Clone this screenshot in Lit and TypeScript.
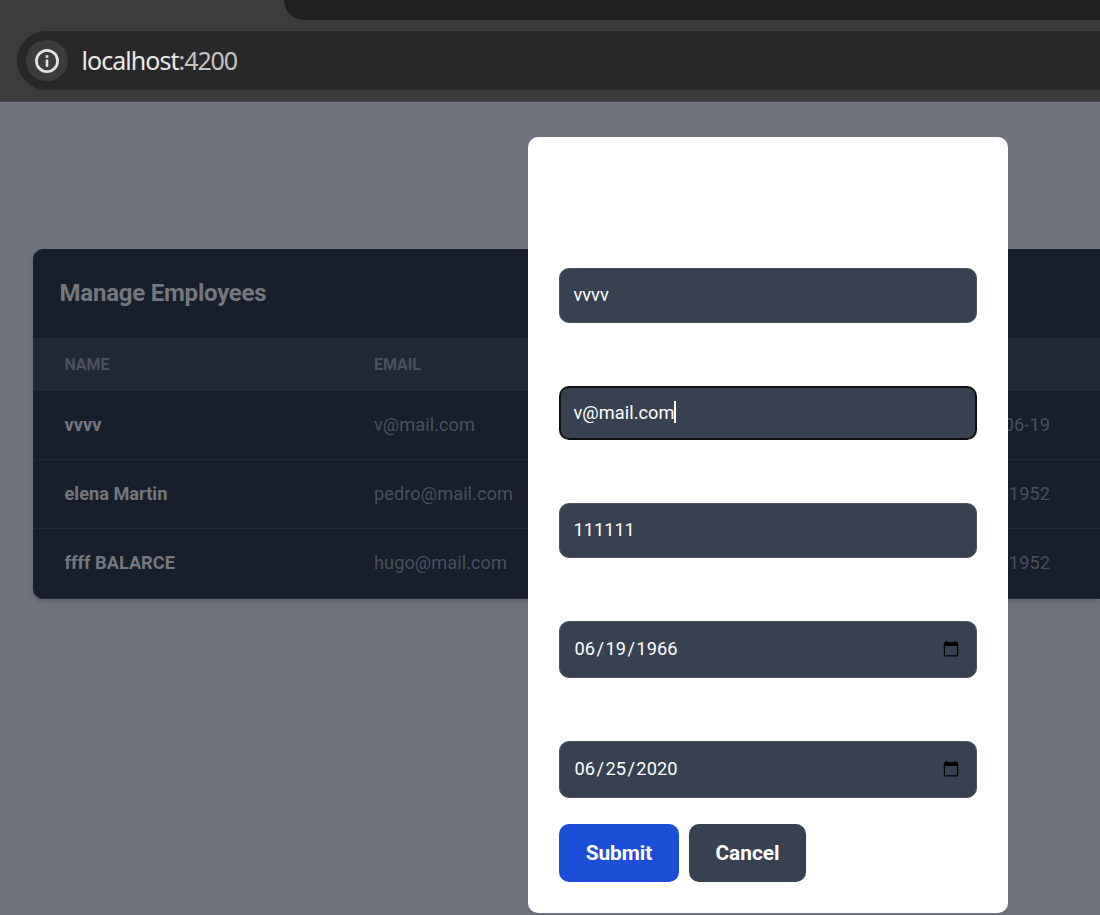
import { LitElement, html, css } from "lit";
import { customElement } from "lit/decorators.js";

interface Employee {
  name: string;
  email: string;
  date: string;
}

const EMPLOYEES: Employee[] = [
  { name: "vvvv", email: "v@mail.com", date: "1966-06-19" },
  { name: "elena Martin", email: "pedro@mail.com", date: "10-10-1952" },
  { name: "ffff BALARCE", email: "hugo@mail.com", date: "10-10-1952" },
];

@customElement("browser-bar")
class BrowserBar extends LitElement {
  static styles = css`
    :host {
      display: block;
      height: 102px;
      box-sizing: border-box;
      background: #3c3c3c;
      border-bottom: 1px solid #464646;
      overflow: hidden;
    }
    .tabs {
      height: 20px;
      margin-left: 284px;
      background: #1f2120;
      border-bottom-left-radius: 20px;
    }
    .address {
      display: flex;
      align-items: center;
      height: 59px;
      margin: 11px 0 0 17px;
      padding-left: 9px;
      box-sizing: border-box;
      background: #282828;
      border-radius: 29.5px 0 0 29.5px;
    }
    .info {
      display: flex;
      align-items: center;
      justify-content: center;
      width: 41.5px;
      height: 41.5px;
      border-radius: 50%;
      background: #3c3c3c;
    }
    .info svg {
      display: block;
    }
    .url {
      margin-left: 14px;
      padding-bottom: 2px;
      font: 25px/34px "Noto Sans", sans-serif;
      letter-spacing: -0.95px;
      color: #e8e8e8;
      white-space: nowrap;
    }
    .port {
      color: #c4c4c4;
      letter-spacing: -1.1px;
    }
  `;

  render() {
    return html`
      <div class="tabs"></div>
      <div class="address">
        <div class="info">
          <svg width="24" height="24" viewBox="0 0 24 24">
            <circle cx="12" cy="12" r="10.6" fill="none" stroke="#e3e3e3" stroke-width="2.7" />
            <rect x="10.7" y="6.2" width="2.6" height="2.6" fill="#e3e3e3" />
            <rect x="10.7" y="10.6" width="2.6" height="7.2" fill="#e3e3e3" />
          </svg>
        </div>
        <div class="url">localhost<span class="port">:4200</span></div>
      </div>
    `;
  }
}

@customElement("employee-table")
class EmployeeTable extends LitElement {
  static styles = css`
    :host {
      display: block;
      box-sizing: border-box;
      height: 350px;
      background: #171e2c;
      border-radius: 10px 0 0 10px;
      box-shadow: 0 4px 7px -1px rgba(0, 0, 0, 0.1), 0 3px 5px -2px rgba(0, 0, 0, 0.1);
      overflow: hidden;
      font-family: Roboto, sans-serif;
      color: #74777e;
    }
    .title {
      height: 89px;
      box-sizing: border-box;
      padding: 29px 26.5px 0;
      font-size: 24px;
      line-height: 30px;
      font-weight: 700;
      letter-spacing: -0.22px;
    }
    .row {
      display: grid;
      grid-template-columns: 309.5px 588px 1fr;
      align-items: center;
      height: 69px;
      box-sizing: border-box;
      padding-left: 31.5px;
      padding-bottom: 2px;
      border-bottom: 1px solid #212836;
      font-size: 18.2px;
      white-space: nowrap;
    }
    .row.last {
      height: 70px;
    }
    .row.head {
      height: 53px;
      padding-bottom: 0;
      border: 0;
      background: #212836;
      font-size: 15.9px;
      font-weight: 700;
      color: #4a515d;
    }
    .name {
      font-weight: 700;
    }
    .cell {
      color: #4a515d;
      letter-spacing: 0.06px;
    }
    .date {
      justify-self: start;
      width: 88px;
      display: flex;
      justify-content: flex-end;
    }
  `;

  render() {
    return html`
      <div class="title">Manage Employees</div>
      <div class="row head"><span>NAME</span><span>EMAIL</span></div>
      ${EMPLOYEES.map(
        (e, i) => html`
          <div class="row ${i === EMPLOYEES.length - 1 ? "last" : ""}">
            <span class="name">${e.name}</span>
            <span class="cell">${e.email}</span>
            <span class="cell date">${e.date}</span>
          </div>
        `
      )}
    `;
  }
}

@customElement("employee-form")
class EmployeeForm extends LitElement {
  static styles = css`
    :host {
      display: flex;
      flex-direction: column;
      box-sizing: border-box;
      width: 480px;
      height: 776px;
      padding: 131px 31px 31px;
      background: #fff;
      border-radius: 10px;
      font-family: Roboto, sans-serif;
    }
    .fields {
      display: flex;
      flex-direction: column;
      gap: 63px;
    }
    .field {
      display: flex;
      align-items: center;
      height: 55px;
      box-sizing: border-box;
      padding: 0 17px 2px 13.5px;
      border: 1px solid #4b5563;
      border-radius: 10px;
      background: #384151;
      color: #fff;
      font-size: 18.2px;
      white-space: nowrap;
    }
    .field.focused {
      height: 54px;
      padding-left: 12.5px;
      padding-right: 16px;
      border: 2px solid #101010;
      letter-spacing: 0.05px;
    }
    .caret {
      width: 2px;
      height: 22px;
      background: #fff;
    }
    .field.date {
      height: 57px;
      padding-left: 14.5px;
      letter-spacing: 0.12px;
    }
    .field svg {
      display: block;
      margin-left: auto;
    }
    .slash {
      padding: 0 1.3px;
    }
    .actions {
      display: flex;
      gap: 10px;
      margin-top: 26px;
    }
    .button {
      display: flex;
      align-items: center;
      justify-content: center;
      width: 120px;
      height: 58px;
      border-radius: 10px;
      background: #1d4ed8;
      color: #fff;
      font-size: 20.8px;
      font-weight: 700;
    }
    .button.cancel {
      width: 117px;
      background: #384151;
    }
  `;

  private dateField(month: string, day: string, year: string) {
    return html`
      <div class="field date">
        <span>${month}</span><span class="slash">/</span><span>${day}</span><span class="slash">/</span><span>${year}</span>
        <svg width="16" height="17" viewBox="0 0 16 17">
          <path
            fill="#000"
            fill-rule="evenodd"
            d="M3 1h1.5v1.3h7v-1.3h1.5v1.3h1q1.2 0 1.2 1.2v11.8q0 1.2-1.2 1.2h-12q-1.2 0-1.2-1.2v-11.8q0-1.2 1.2-1.2h1zM2 6v9.3h12v-9.3z"
          />
        </svg>
      </div>
    `;
  }

  render() {
    return html`
      <div class="fields">
        <div class="field"><span>vvvv</span></div>
        <div class="field focused"><span>v@mail.com</span><span class="caret"></span></div>
        <div class="field"><span>111111</span></div>
        ${this.dateField("06", "19", "1966")} ${this.dateField("06", "25", "2020")}
      </div>
      <div class="actions">
        <div class="button">Submit</div>
        <div class="button cancel">Cancel</div>
      </div>
    `;
  }
}

@customElement("app-root")
class AppRoot extends LitElement {
  static styles = css`
    :host {
      display: flex;
      flex-direction: column;
      position: relative;
      width: 1100px;
      height: 915px;
      overflow: hidden;
      background: #6e727c;
    }
    .page {
      flex: 1;
      padding: 147px 0 0 33px;
    }
    .modal {
      position: absolute;
      left: 528px;
      top: 137px;
    }
  `;

  render() {
    return html`
      <browser-bar></browser-bar>
      <div class="page"><employee-table></employee-table></div>
      <employee-form class="modal"></employee-form>
    `;
  }
}
